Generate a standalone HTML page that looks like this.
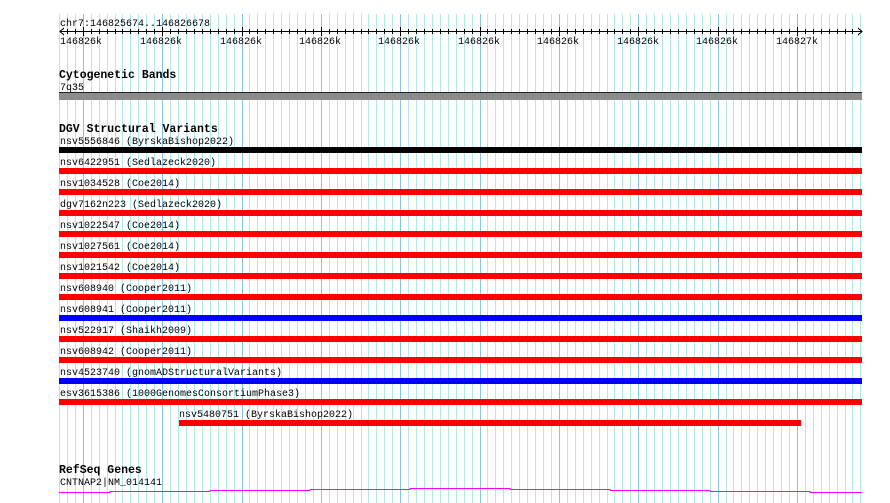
<!DOCTYPE html>
<html><head><meta charset="utf-8"><style>
html,body{margin:0;padding:0;background:#fff;}
svg{display:block;}
text{font-family:"Liberation Mono","DejaVu Sans Mono",monospace;font-size:10px;fill:#000;}
.b{font-weight:bold;font-size:11.5px;}
</style></head><body>
<svg width="890" height="503" viewBox="0 0 890 503" xmlns="http://www.w3.org/2000/svg">
<g shape-rendering="crispEdges" stroke-width="1" fill="none">
<path stroke="#b4e8ee" d="M59.5 14V503M67.5 14V503M75.5 14V503M91.5 14V503M99.5 14V503M107.5 14V503M115.5 14V503M122.5 14V503M130.5 14V503M138.5 14V503M146.5 14V503M154.5 14V503M170.5 14V503M178.5 14V503M186.5 14V503M194.5 14V503M202.5 14V503M210.5 14V503M218.5 14V503M226.5 14V503M234.5 14V503M249.5 14V503M257.5 14V503M265.5 14V503M273.5 14V503M281.5 14V503M289.5 14V503M297.5 14V503M305.5 14V503M313.5 14V503M329.5 14V503M337.5 14V503M345.5 14V503M353.5 14V503M361.5 14V503M368.5 14V503M376.5 14V503M384.5 14V503M392.5 14V503M408.5 14V503M416.5 14V503M424.5 14V503M432.5 14V503M440.5 14V503M448.5 14V503M456.5 14V503M464.5 14V503M472.5 14V503M487.5 14V503M495.5 14V503M503.5 14V503M511.5 14V503M519.5 14V503M527.5 14V503M535.5 14V503M543.5 14V503M551.5 14V503M567.5 14V503M575.5 14V503M583.5 14V503M591.5 14V503M599.5 14V503M607.5 14V503M614.5 14V503M622.5 14V503M630.5 14V503M646.5 14V503M654.5 14V503M662.5 14V503M670.5 14V503M678.5 14V503M686.5 14V503M694.5 14V503M702.5 14V503M710.5 14V503M726.5 14V503M733.5 14V503M741.5 14V503M749.5 14V503M757.5 14V503M765.5 14V503M773.5 14V503M781.5 14V503M789.5 14V503M805.5 14V503M813.5 14V503M821.5 14V503M829.5 14V503M837.5 14V503M845.5 14V503M852.5 14V503M860.5 14V503"/>
<path stroke="#88c4e4" d="M83.5 14V503M162.5 14V503M242.5 14V503M321.5 14V503M400.5 14V503M480.5 14V503M559.5 14V503M638.5 14V503M718.5 14V503M797.5 14V503"/>
</g>
<text x="60" y="26">chr7:146825674..146826678</text>
<g shape-rendering="crispEdges" stroke="#000" fill="none">
<path d="M60 31.5H862"/>
<path d="M67.5 29V34M75.5 29V34M91.5 29V34M99.5 29V34M107.5 29V34M115.5 29V34M122.5 29V34M130.5 29V34M138.5 29V34M146.5 29V34M154.5 29V34M170.5 29V34M178.5 29V34M186.5 29V34M194.5 29V34M202.5 29V34M210.5 29V34M218.5 29V34M226.5 29V34M234.5 29V34M249.5 29V34M257.5 29V34M265.5 29V34M273.5 29V34M281.5 29V34M289.5 29V34M297.5 29V34M305.5 29V34M313.5 29V34M329.5 29V34M337.5 29V34M345.5 29V34M353.5 29V34M361.5 29V34M368.5 29V34M376.5 29V34M384.5 29V34M392.5 29V34M408.5 29V34M416.5 29V34M424.5 29V34M432.5 29V34M440.5 29V34M448.5 29V34M456.5 29V34M464.5 29V34M472.5 29V34M487.5 29V34M495.5 29V34M503.5 29V34M511.5 29V34M519.5 29V34M527.5 29V34M535.5 29V34M543.5 29V34M551.5 29V34M567.5 29V34M575.5 29V34M583.5 29V34M591.5 29V34M599.5 29V34M607.5 29V34M614.5 29V34M622.5 29V34M630.5 29V34M646.5 29V34M654.5 29V34M662.5 29V34M670.5 29V34M678.5 29V34M686.5 29V34M694.5 29V34M702.5 29V34M710.5 29V34M726.5 29V34M733.5 29V34M741.5 29V34M749.5 29V34M757.5 29V34M765.5 29V34M773.5 29V34M781.5 29V34M789.5 29V34M805.5 29V34M813.5 29V34M821.5 29V34M829.5 29V34M837.5 29V34M845.5 29V34M852.5 29V34"/>
<path d="M83.5 27V36M162.5 27V36M242.5 27V36M321.5 27V36M400.5 27V36M480.5 27V36M559.5 27V36M638.5 27V36M718.5 27V36M797.5 27V36"/>
<polyline points="64,28 60,31.5 64,35"/><polyline points="858,28 862,31.5 858,35"/>
</g>
<text x="60" y="44">146826k</text><text x="140" y="44">146826k</text><text x="220" y="44">146826k</text><text x="299" y="44">146826k</text><text x="378" y="44">146826k</text><text x="458" y="44">146826k</text><text x="537" y="44">146826k</text><text x="617" y="44">146826k</text><text x="696" y="44">146826k</text><text x="776" y="44">146827k</text>

<text class="b" x="59" y="78">Cytogenetic Bands</text>
<text x="60" y="90">7q35</text>
<rect x="59" y="93" width="803" height="7" fill="#8c8c8c"/>
<rect x="59" y="92" width="803" height="1" fill="#222"/>

<text class="b" x="59" y="132">DGV Structural Variants</text>
<text x="60" y="144">nsv5556846 (ByrskaBishop2022)</text><rect x="59" y="147" width="803" height="6" fill="#000"/>
<text x="60" y="165">nsv6422951 (Sedlazeck2020)</text><rect x="59" y="168" width="803" height="6" fill="#f00"/>
<text x="60" y="186">nsv1034528 (Coe2014)</text><rect x="59" y="189" width="803" height="6" fill="#f00"/>
<text x="60" y="207">dgv7162n223 (Sedlazeck2020)</text><rect x="59" y="210" width="803" height="6" fill="#f00"/>
<text x="60" y="228">nsv1022547 (Coe2014)</text><rect x="59" y="231" width="803" height="6" fill="#f00"/>
<text x="60" y="249">nsv1027561 (Coe2014)</text><rect x="59" y="252" width="803" height="6" fill="#f00"/>
<text x="60" y="270">nsv1021542 (Coe2014)</text><rect x="59" y="273" width="803" height="6" fill="#f00"/>
<text x="60" y="291">nsv608940 (Cooper2011)</text><rect x="59" y="294" width="803" height="6" fill="#f00"/>
<text x="60" y="312">nsv608941 (Cooper2011)</text><rect x="59" y="315" width="803" height="6" fill="#00f"/>
<text x="60" y="333">nsv522917 (Shaikh2009)</text><rect x="59" y="336" width="803" height="6" fill="#f00"/>
<text x="60" y="354">nsv608942 (Cooper2011)</text><rect x="59" y="357" width="803" height="6" fill="#f00"/>
<text x="60" y="375">nsv4523740 (gnomADStructuralVariants)</text><rect x="59" y="378" width="803" height="6" fill="#00f"/>
<text x="60" y="396">esv3615386 (1000GenomesConsortiumPhase3)</text><rect x="59" y="399" width="803" height="6" fill="#f00"/>
<text x="179" y="417">nsv5480751 (ByrskaBishop2022)</text><rect x="179" y="420" width="622" height="6" fill="#f00"/>

<text class="b" x="59" y="473">RefSeq Genes</text>
<text x="60" y="485">CNTNAP2|NM_014141</text>
<polyline fill="none" stroke="#f0f" stroke-width="1" shape-rendering="crispEdges" points="59,492.5 110,492.5 110,491.5 210,491.5 210,490.5 310,490.5 310,489.5 410,489.5 410,488.5 510,488.5 510,489.5 610,489.5 610,490.5 710,490.5 710,491.5 810,491.5 810,492.5 862,492.5"/>
</svg>
</body></html>
